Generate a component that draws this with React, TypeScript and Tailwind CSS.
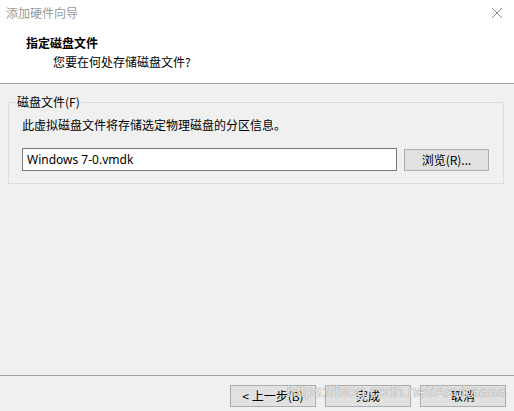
export default function App() {
  const font = { fontFamily: '"Microsoft YaHei UI", "Noto Sans CJK SC", "Liberation Sans", sans-serif' };

  return (
    <div className="relative w-[514px] h-[411px] bg-[#f0f0f0] text-[12px] text-black overflow-hidden" style={font}>
      {/* Header */}
      <div className="h-[84px] bg-white border-b border-[#a0a0a0] relative">
        <div className="flex items-center justify-between h-[25px] pl-[6px] pr-[10px]">
          <span className="text-[#999999] leading-none">添加硬件向导</span>
          <svg width="12" height="12" viewBox="0 0 12 12" className="mr-[1px]">
            <path d="M1 1 L11 11 M11 1 L1 11" stroke="#8a8a8a" strokeWidth="1" />
          </svg>
        </div>
        <div className="pl-[26px] pt-[10px] font-bold leading-[16px]">指定磁盘文件</div>
        <div className="pl-[53px] pt-[3px] leading-[16px]">您要在何处存储磁盘文件?</div>
      </div>

      {/* Body */}
      <div className="h-[291px] pt-[18px] px-[8px]">
        <div className="relative border border-[#dcdcdc] h-[82px] w-[496px] px-[13px] pt-[14px]">
          <span className="absolute left-[7px] top-[-9px] bg-[#f0f0f0] px-[1px] leading-[16px]">磁盘文件(F)</span>
          <div className="leading-[16px]">此虚拟磁盘文件将存储选定物理磁盘的分区信息。</div>
          <div className="flex items-center mt-[15px]">
            <div className="w-[375px] h-[23px] bg-white border border-[#7a7a7a] flex items-center pl-[4px]" style={{ fontFamily: '"Segoe UI", "Noto Sans", "Liberation Sans", sans-serif' }}>
              Windows 7-0.vmdk
            </div>
            <button className="ml-[7px] w-[85px] h-[22px] bg-[#e1e1e1] border border-[#adadad] flex items-center justify-center leading-none">
              浏览(R)...
            </button>
          </div>
        </div>
      </div>

      {/* Footer */}
      <div className="border-t border-[#a0a0a0] h-[35px] flex items-start justify-end pr-[8px] pt-[9px] gap-[9px]">
        <button className="w-[86px] h-[22px] bg-[#e1e1e1] border border-[#adadad] flex items-center justify-center leading-none">
          &lt; 上一步(B)
        </button>
        <button className="w-[86px] h-[22px] bg-[#e1e1e1] border border-[#adadad] flex items-center justify-center leading-none">
          完成
        </button>
        <button className="w-[86px] h-[22px] bg-[#e1e1e1] border border-[#adadad] flex items-center justify-center leading-none">
          取消
        </button>
      </div>

      {/* Watermark */}
      <span
        className="absolute left-[287px] top-[383px] text-[16px] leading-[18px] text-white/80 pointer-events-none"
        style={{ fontFamily: '"Liberation Sans", Arial, sans-serif', textShadow: '0 0 1px rgba(90,90,90,0.9)' }}
      >
        https://blog.csdn.net/Asukaaaa
      </span>
    </div>
  );
}
